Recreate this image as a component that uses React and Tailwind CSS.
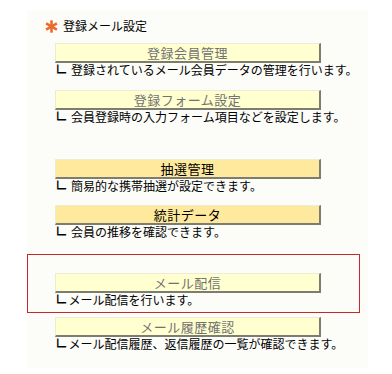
import React from "react";

const menu = [
  { label: "登録会員管理", note: "∟ 登録されているメール会員データの管理を行います。", tone: "light" },
  { label: "登録フォーム設定", note: "∟ 会員登録時の入力フォーム項目などを設定します。", tone: "light" },
  { label: "抽選管理", note: "∟ 簡易的な携帯抽選が設定できます。", tone: "gold" },
  { label: "統計データ", note: "∟ 会員の推移を確認できます。", tone: "gold" },
];

function Star() {
  return (
    <svg width="13" height="13" viewBox="0 0 12 12" className="shrink-0">
      <g stroke="#ee6a2c" strokeWidth="2.4" strokeLinecap="butt">
        <line x1="6" y1="0.3" x2="6" y2="11.7" />
        <line x1="1" y1="3.1" x2="11" y2="8.9" />
        <line x1="1" y1="8.9" x2="11" y2="3.1" />
      </g>
    </svg>
  );
}

function MenuButton({ label, tone }) {
  const fill =
    tone === "gold"
      ? "bg-[#ffe99c] text-black"
      : "bg-[#ffffcf] text-[#727272]";
  return (
    <button
      className={`${fill} w-[266px] h-[20px] flex items-center justify-center border-t border-l border-[#ecebd4] border-b-2 border-r-2 border-b-[#7c7c70] border-r-[#7c7c70] text-[13px] leading-none tracking-[0.5px]`}
    >
      {label}
    </button>
  );
}

function Block({ label, note, tone, className = "" }) {
  return (
    <div className={className}>
      <MenuButton label={label} tone={tone} />
      <p className="text-[12px] leading-[14px] text-black whitespace-pre">
        <span className="inline-block text-[16px] leading-[14px] align-top font-['DejaVu_Sans',sans-serif]">∟</span>
        {note.slice(1)}
      </p>
    </div>
  );
}

export default function App() {
  return (
    <div className="w-[392px] h-[374px] bg-white pt-[10px] pl-[27px] font-['Noto_Sans_CJK_JP',sans-serif]">
      <div className="w-[341px] h-[358px] bg-[#fcfcf9] pt-[8px]">
        {/* title */}
        <div className="flex items-center gap-[5px] pl-[18px] h-[16px]">
          <Star />
          <span className="text-[12px] leading-[16px] text-black">登録メール設定</span>
        </div>

        <div className="pl-[28px] mt-[9px]">
          <Block {...menu[0]} />
          <Block {...menu[1]} className="mt-[13px]" />
          <Block {...menu[2]} className="mt-[35px]" />
          <Block {...menu[3]} className="mt-[12px]" />
        </div>

        {/* highlighted item */}
        <div className="mt-[15px] w-[333px] border border-[#c8282c] pl-[27px] pt-[18px] pb-[5px]">
          <Block label="メール配信" note="∟メール配信を行います。" tone="light" />
        </div>

        <div className="pl-[28px] mt-[4px]">
          <Block label="メール履歴確認" note="∟メール配信履歴、返信履歴の一覧が確認できます。" tone="light" />
        </div>
      </div>
    </div>
  );
}
